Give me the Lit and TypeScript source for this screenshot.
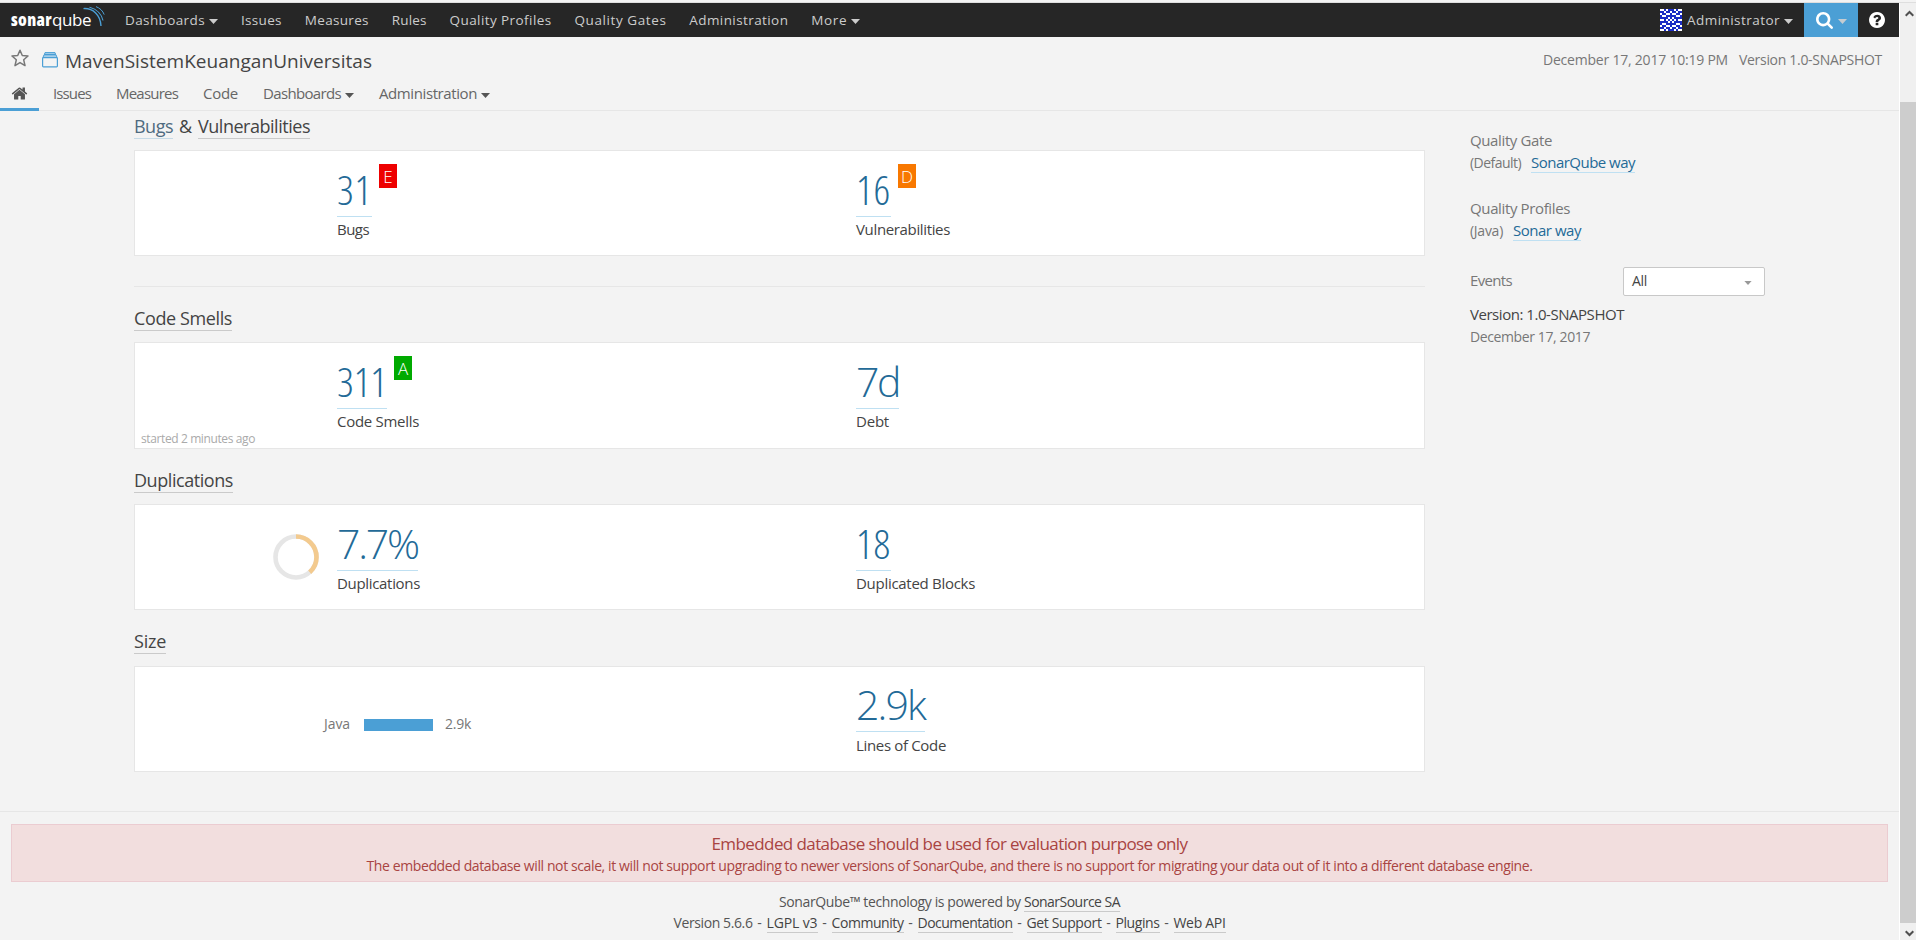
import { LitElement, html, css, svg, nothing } from "lit";
import { customElement, property } from "lit/decorators.js";

/** A single line of text tracked so that it fills an exact width. */
@customElement("text-run")
class TextRun extends LitElement {
  @property({ type: Number }) width = 0;
  @property() text = "";

  static styles = css`
    :host {
      display: inline-block;
      white-space: pre;
      flex: none;
    }
    .run {
      display: inline-block;
    }
  `;

  updated() {
    const run = this.renderRoot.querySelector(".run") as HTMLElement;
    run.style.letterSpacing = "0px";
    const natural = run.getBoundingClientRect().width;
    run.style.letterSpacing = `${(this.width - natural) / this.text.length}px`;
    this.style.width = `${this.width}px`;
  }

  render() {
    return html`<span class="run">${this.text}</span>`;
  }
}

const t = (text: string, width: number, cls = "") =>
  html`<text-run class=${cls} .text=${text} .width=${width}></text-run>`;

const caret = (cls = "") =>
  html`<svg class="caret ${cls}" width="9" height="5" viewBox="0 0 9 5"><path d="M0 0H9L4.5 5Z" fill="currentColor" /></svg>`;

const starIcon = html`<svg class="star" width="18" height="18" viewBox="0 0 18 18">
  <path d="M9 1.2L11.3 6.5L17 7L12.7 10.8L14 16.6L9 13.6L4 16.6L5.3 10.8L1 7L6.7 6.5Z" fill="none" stroke="#777" stroke-width="1.5" stroke-linejoin="round" />
</svg>`;

const projectIcon = html`<svg class="project" width="16" height="16" viewBox="0 0 16 16">
  <path d="M3 0.6H13L13.6 2.5H2.4ZM2 2.8H14L15 5.5H1Z" fill="#a5cfea" stroke="#4b9fd5" stroke-width="1" />
  <rect x="0.6" y="5.6" width="14.8" height="9.2" rx="0.8" fill="#f3f3f3" stroke="#4b9fd5" stroke-width="1.2" />
</svg>`;

const homeIcon = html`<svg class="home" width="17" height="17" viewBox="0 0 1792 1792">
  <path fill="#555" d="M1472 992v480q0 26-19 45t-45 19h-384v-384h-256v384h-384q-26 0-45-19t-19-45v-480q0-1 .5-3t.5-3l575-474 575 474q1 2 1 6zm223-69l-62 74q-8 9-21 11h-3q-13 0-21-7l-692-577-692 577q-12 8-24 7-13-2-21-11l-62-74q-8-10-7-23.5t11-21.5l719-599q32-26 76-26t76 26l244 204v-195q0-14 9-23t23-9h192q14 0 23 9t9 23v408l219 182q10 8 11 21.5t-7 23.5z" />
</svg>`;

const searchIcon = html`<svg class="search-icon" width="17" height="17" viewBox="64 128 1664 1664">
  <path fill="#fff" d="M1216 832q0-185-131.5-316.5t-316.5-131.5-316.5 131.5-131.5 316.5 131.5 316.5 316.5 131.5 316.5-131.5 131.5-316.5zm512 832q0 52-38 90t-90 38q-54 0-90-38l-343-342q-179 124-399 124-143 0-273.5-55.5t-225-150-150-225-55.5-273.5 55.5-273.5 150-225 225-150 273.5-55.5 273.5 55.5 225 150 150 225 55.5 273.5q0 220-124 399l343 343q37 37 37 90z" />
</svg>`;

const helpIcon = html`<svg class="help" width="16" height="16" viewBox="0 128 1536 1536">
  <path fill="#fff" d="M896 1376v-192q0-14-9-23t-23-9h-192q-14 0-23 9t-9 23v192q0 14 9 23t23 9h192q14 0 23-9t9-23zm256-672q0-88-55.5-163t-138.5-116-170-41q-243 0-371 213-15 24 8 42l132 100q7 6 19 6 16 0 25-12 53-68 86-92 34-24 86-24 48 0 85.5 26t37.5 59q0 38-20 61t-68 45q-63 28-115.5 86.5t-52.5 125.5v36q0 14 9 23t23 9h192q14 0 23-9t9-23q0-19 21.5-49.5t54.5-49.5q32-18 49-28.5t46-35 44.5-48 28-60.5 12.5-81zm384 192q0 209-103 385.5t-279.5 279.5-385.5 103-385.5-103-279.5-279.5-103-385.5 103-385.5 279.5-279.5 385.5-103 385.5 103 279.5 279.5 103 385.5z" />
</svg>`;

const waves = html`<svg class="waves" width="22" height="22" viewBox="0 0 22 22" fill="none" stroke="#4b9fd5">
  <path d="M0.5 2.6C10 2 17.5 9 18 20" stroke-width="1.4" />
  <path d="M6.5 1.2C14 3 18.8 8.5 20 14.5" stroke-width="1.1" />
  <path d="M13 0.6C17 2.2 19.8 4.8 21.2 8.6" stroke-width="1" />
</svg>`;

/* Left half of the avatar's mirrored pattern, centre column last. */
const AVATAR = [
  "001011",
  "110110",
  "011001",
  "100111",
  "111101",
  "001010",
  "111101",
  "100111",
  "011001",
  "110110",
  "001011",
];

const avatar = html`<svg class="avatar" width="22" height="22" viewBox="0 0 11 11" shape-rendering="crispEdges">
  <rect width="11" height="11" fill="#fff" />
  ${AVATAR.flatMap((row, y) =>
    [...row, ...[...row.slice(0, 5)].reverse()].map((c, x) =>
      c === "1" ? svg`<rect x=${x} y=${y} width="1" height="1" fill="#1a2bc4" />` : nothing
    )
  )}
</svg>`;

interface NavItem {
  label: string;
  width: number;
  menu?: boolean;
}

const GLOBAL_NAV: NavItem[] = [
  { label: "Dashboards", width: 80, menu: true },
  { label: "Issues", width: 41 },
  { label: "Measures", width: 64 },
  { label: "Rules", width: 35 },
  { label: "Quality Profiles", width: 102 },
  { label: "Quality Gates", width: 92 },
  { label: "Administration", width: 99 },
  { label: "More", width: 36, menu: true },
];

const TABS: NavItem[] = [
  { label: "Issues", width: 38 },
  { label: "Measures", width: 62 },
  { label: "Code", width: 35 },
  { label: "Dashboards", width: 78, menu: true },
  { label: "Administration", width: 98, menu: true },
];

const LINKS: [string, number][] = [
  ["LGPL v3", 51],
  ["Community", 72],
  ["Documentation", 95],
  ["Get Support", 75],
  ["Plugins", 44],
  ["Web API", 52],
];

@customElement("app-root")
class AppRoot extends LitElement {
  static styles = css`
    :host {
      display: flex;
      flex-direction: column;
      width: 1916px;
      height: 940px;
      overflow: hidden;
      background: #f3f3f3;
      color: #444;
      font-family: "Open Sans", "Noto Sans", sans-serif;
      font-size: 15px;
      font-stretch: 94%;
      line-height: 20px;
    }
    * { box-sizing: border-box; }
    svg { display: block; flex: none; }
    .chrome { height: 3px; flex: none; border-bottom: 1px solid #dedede; }
    .window { display: flex; flex: 1; min-height: 0; }
    .page { width: 1899px; flex: none; display: flex; flex-direction: column; }

    .navbar { height: 34px; flex: none; display: flex; background: #262626; color: #ccc; font-size: 13.5px; line-height: 34px; padding-left: 11px; }
    .logo { display: flex; width: 114px; color: #fff; font-size: 17px; line-height: 34px; }
    .logo .strong { font-weight: 800; font-stretch: 84%; }
    .waves { margin: 3px 0 0 -8px; }
    .menu { display: flex; gap: 22.9px; }
    .entry { display: flex; }
    .entry .caret { margin: 16px 0 0 4px; }
    .user { display: flex; margin-left: auto; width: 144px; }
    .avatar { margin: 6px 5px 0 0; }
    .user .caret { margin: 16px 0 0 4px; }
    .search { width: 54px; display: flex; background: #4b9fd5; }
    .search-icon { margin: 9px 5px 0 12px; }
    .search .caret { margin-top: 16px; color: #c5ccd1; }
    .help { margin: 9px 14px 0 11px; }

    .context { flex: none; height: 74px; border-bottom: 1px solid #e6e6e6; padding-top: 12px; }
    .title-row { display: flex; height: 24px; padding-left: 11px; font-size: 19px; line-height: 24px; }
    .project { margin: 3px 7px 0 13px; }
    .meta { margin-left: auto; display: flex; gap: 11px; padding-right: 17px; font-size: 14px; line-height: 22px; color: #777; }
    .tabs { display: flex; margin-top: 5px; height: 33px; line-height: 31px; color: #666; }
    .active { width: 39px; border-bottom: 3px solid #4b9fd5; padding: 7px 0 0 11px; margin-right: 14px; }
    .tab { display: flex; margin-right: 25px; }
    .tab .caret { margin: 15px 0 0 4px; color: #555; }

    .main { display: flex; flex: none; height: 700px; padding: 3px 0 0 134px; }
    .overview { width: 1291px; }
    .section { margin-bottom: 19px; }
    .section.first { margin-bottom: 30px; }
    .heading { display: flex; gap: 6px; height: 25px; margin-bottom: 11px; font-size: 18px; line-height: 24px; }
    .link { border-bottom: 1px solid #cacaca; color: #444; }
    .hover { color: #4f6b80; border-color: #c6dae6; }
    .blue { color: #236a97; border-bottom: 1px solid #bfe0f2; }
    .rule { height: 1px; background: #e6e6e6; margin-bottom: 19px; }
    .card { height: 106px; background: #fff; border: 1px solid #e6e6e6; display: grid; grid-template-columns: 202px 519px 1fr; }
    .card.tall { height: 107px; }
    .section.short .heading { margin-bottom: 12px; }
    .section.short .metric { padding-top: 11px; }
    .section.short .label { margin-top: 3px; }
    .metric { padding-top: 12px; }
    .value { display: flex; align-items: flex-start; gap: 7px; font-size: 41px; font-weight: 300; line-height: 53px; height: 54px; font-stretch: 88%; }
    .value .narrow { font-stretch: 80%; }
    .rating { width: 18px; height: 24px; margin-top: 1px; color: #fff; font-size: 17px; line-height: 25px; text-align: center; font-weight: 300; font-stretch: 100%; }
    .e { background: #e00; }
    .a { background: #0a0; }
    .d { background: #f87800; }
    .label { margin-top: 2px; line-height: 20px; height: 20px; }
    .slot { display: flex; }
    .slot.end { justify-content: flex-end; align-items: center; padding-right: 18px; }
    .slot.started { align-items: flex-end; padding: 0 0 1px 6px; font-size: 12px; line-height: 16px; color: #aaa; }
    .chart { grid-column: 1 / 3; display: flex; align-items: center; padding: 12px 0 0 189px; font-size: 14px; line-height: 18px; color: #777; }
    .chart text-run { margin-bottom: 2px; }
    .bar { width: 69px; height: 12px; background: #4b9fd5; margin: 0 12px 0 14px; }
    /* The metric next to the chart occupies the last column. */
    .chart + .metric { grid-column: 3; }

    .side { margin-left: 45px; padding-top: 16px; color: #777; width: 300px; }
    .side-title { height: 20px; }
    .side-row { display: flex; gap: 10px; height: 21px; margin: 2px 0 25px; }
    .side-row text-run { line-height: 20px; }
    .side-row .small { font-size: 14px; line-height: 21px; }
    .side .blue { height: 21px; }
    .events { display: flex; align-items: center; height: 29px; justify-content: space-between; width: 295px; line-height: 18px; margin-top: 26px; }
    .events > text-run { margin-bottom: 3px; }
    .select { width: 142px; height: 29px; background: #fff; border: 1px solid #c8c8c8; border-radius: 2px; display: flex; align-items: center; justify-content: space-between; padding: 0 12px 0 8px; color: #444; font-size: 14px; line-height: 26px; }
    .select text-run { margin-bottom: 1px; }
    .select .caret { color: #999; width: 8px; height: 4px; margin-top: 3px; }
    .version { margin-top: 8px; color: #444; height: 20px; }
    .date { margin-top: 2px; font-size: 14px; line-height: 21px; height: 20px; }

    .footer { border-top: 1px solid #e6e6e6; display: flex; flex-direction: column; align-items: center; padding: 12px 11px 0; font-size: 14px; color: #555; }
    .alert { width: 1877px; height: 58px; background: #f2dede; border: 1px solid #ebccd1; color: #a94442; display: flex; flex-direction: column; align-items: center; padding-top: 8px; margin-bottom: 11px; }
    .alert-title { font-size: 17px; line-height: 22px; height: 23px; }
    .line { display: flex; height: 19px; line-height: 18px; margin-bottom: 2px; }
    .dash { width: 14px; text-align: center; }

    .gutter { width: 1px; background: #fff; }
    .scroll { width: 16px; background: #f0f0f0; display: flex; flex-direction: column; justify-content: space-between; }
    .scroll .up { margin: 7px 0 0 5px; }
    .scroll .down { margin: 6px 0 3px 5px; }
    .thumb { height: 821px; background: #cdcdcd; margin-top: 85px; margin-bottom: auto; }
  `;

  private metric(value: string, vw: number, label: string, lw: number, rating = "") {
    return html`<div class="metric">
      <div class="value">
        ${t(value, vw, value.includes("1") ? "blue narrow" : "blue")}
        ${rating ? html`<span class="rating ${rating.toLowerCase()}">${rating}</span>` : nothing}
      </div>
      <div class="label">${t(label, lw)}</div>
    </div>`;
  }

  private arrow(dir: "up" | "down") {
    return html`<svg class=${dir} width="9" height="7" viewBox="0 0 9 7">
      <path d=${dir === "up" ? "M0.7 5.8L4.5 2L8.3 5.8" : "M0.7 1.2L4.5 5L8.3 1.2"} fill="none" stroke="#505050" stroke-width="2" />
    </svg>`;
  }

  render() {
    return html`
      <div class="chrome"></div>
      <div class="window">
        <div class="page">
          <nav class="navbar">
            <div class="logo">${t("sonar", 41, "strong")}${t("qube", 39)}${waves}</div>
            <div class="menu">
              ${GLOBAL_NAV.map(
                (n) => html`<div class="entry">${t(n.label, n.width)}${n.menu ? caret() : nothing}</div>`
              )}
            </div>
            <div class="user">${avatar}${t("Administrator", 93)}${caret()}</div>
            <div class="search">${searchIcon}${caret()}</div>
            ${helpIcon}
          </nav>
          <header class="context">
            <div class="title-row">
              ${starIcon}${projectIcon}${t("MavenSistemKeuanganUniversitas", 307)}
              <div class="meta">${t("December 17, 2017 10:19 PM", 185)}${t("Version 1.0-SNAPSHOT", 143)}</div>
            </div>
            <div class="tabs">
              <div class="active">${homeIcon}</div>
              ${TABS.map((n) => html`<div class="tab">${t(n.label, n.width)}${n.menu ? caret() : nothing}</div>`)}
            </div>
          </header>
          <main class="main">
            <div class="overview">
              <section class="section first">
                <div class="heading">${t("Bugs", 39, "link hover")}${t("&", 13)}${t("Vulnerabilities", 112, "link")}</div>
                <div class="card">
                  <div class="slot"></div>
                  ${this.metric("31", 35, "Bugs", 32, "E")}${this.metric("16", 35, "Vulnerabilities", 94, "D")}
                </div>
              </section>
              <div class="rule"></div>
              <section class="section">
                <div class="heading">${t("Code Smells", 98, "link")}</div>
                <div class="card tall">
                  <div class="slot started">${t("started 2 minutes ago", 114)}</div>
                  ${this.metric("311", 50, "Code Smells", 82, "A")}${this.metric("7d", 43, "Debt", 33)}
                </div>
              </section>
              <section class="section">
                <div class="heading">${t("Duplications", 99, "link")}</div>
                <div class="card">
                  <div class="slot end">
                    <svg width="46" height="46" viewBox="0 0 46 46" fill="none" stroke-width="4.6">
                      <circle cx="23" cy="23" r="20.5" stroke="#e6e6e6" />
                      <circle cx="23" cy="23" r="20.5" stroke="#f3ca8e" pathLength="360" stroke-dasharray="138 222" transform="rotate(-90 23 23)" />
                    </svg>
                  </div>
                  ${this.metric("7.7%", 81, "Duplications", 83)}${this.metric("18", 35, "Duplicated Blocks", 119)}
                </div>
              </section>
              <section class="section short">
                <div class="heading">${t("Size", 32, "link")}</div>
                <div class="card">
                  <div class="chart">${t("Java", 26)}<div class="bar"></div>${t("2.9k", 26)}</div>
                  ${this.metric("2.9k", 69, "Lines of Code", 90)}
                </div>
              </section>
            </div>
            <aside class="side">
              <div class="side-title">${t("Quality Gate", 82)}</div>
              <div class="side-row">${t("(Default)", 51, "small")}${t("SonarQube way", 104, "blue")}</div>
              <div class="side-title">${t("Quality Profiles", 100)}</div>
              <div class="side-row">${t("(Java)", 33, "small")}${t("Sonar way", 68, "blue")}</div>
              <div class="events">${t("Events", 42)}<div class="select">${t("All", 15)}${caret()}</div></div>
              <div class="version">${t("Version: 1.0-SNAPSHOT", 154)}</div>
              <div class="date">${t("December 17, 2017", 120)}</div>
            </aside>
          </main>
          <footer class="footer">
            <div class="alert">
              <div class="alert-title">${t("Embedded database should be used for evaluation purpose only", 476)}</div>
              ${t("The embedded database will not scale, it will not support upgrading to newer versions of SonarQube, and there is no support for migrating your data out of it into a different database engine.", 1166)}
            </div>
            <div class="line">${t("SonarQube™ technology is powered by ", 245)}${t("SonarSource SA", 96, "link")}</div>
            <div class="line">
              ${t("Version 5.6.6", 79)}${LINKS.map(([l, w]) => html`<span class="dash">-</span>${t(l, w, "link")}`)}
            </div>
          </footer>
        </div>
        <div class="gutter"></div>
        <div class="scroll">${this.arrow("up")}<div class="thumb"></div>${this.arrow("down")}</div>
      </div>
    `;
  }
}
